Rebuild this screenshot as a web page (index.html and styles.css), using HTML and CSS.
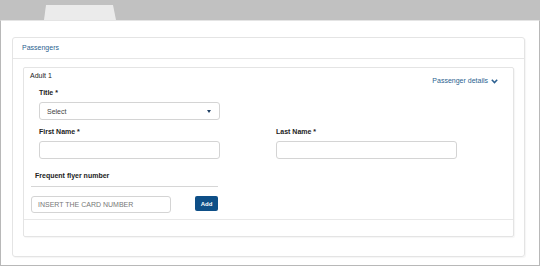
FILE: index.html
```html
<!DOCTYPE html>
<html lang="en">
<head>
  <meta charset="UTF-8" />
  <meta name="viewport" content="width=device-width, initial-scale=1.0"/>
  <title>Passengers</title>
  <link rel="stylesheet" href="styles.css">
</head>
<body>
  <div class="topbar">
    <div class="tab"></div>
  </div>

  <div class="page">
    <div class="panel">
      <div class="panel-head">Passengers</div>
      <div class="panel-body">
        <div class="card">
          <div class="card-head">
            <span class="adult">Adult 1</span>
            <a class="details" href="#">Passenger details
              <svg width="7" height="5" viewBox="0 0 7 5"><polyline points="0.8,0.8 3.5,3.6 6.2,0.8" fill="none" stroke="#2b5f90" stroke-width="1.5"/></svg>
            </a>
          </div>

          <div class="form">
            <label class="lbl">Title *</label>
            <div class="select">
              <span>Select</span>
              <span class="caret"></span>
            </div>

            <div class="row">
              <div class="col">
                <label class="lbl lbl-gap">First Name *</label>
                <div class="input"></div>
              </div>
              <div class="col">
                <label class="lbl lbl-gap">Last Name *</label>
                <div class="input"></div>
              </div>
            </div>
          </div>

          <div class="flyer">
            <div class="flyer-title">Frequent flyer number</div>
            <div class="flyer-row">
              <div class="card-input">INSERT THE CARD NUMBER</div>
              <button class="add">Add</button>
            </div>
          </div>

          <div class="card-foot"></div>
        </div>
      </div>
    </div>
  </div>
</body>
</html>
```

FILE: styles.css
```css
body {
  margin: 0;
  background: #fff;
  font-family: "Liberation Sans", Arial, sans-serif;
  font-size: 7px;
  color: #333;
}
.topbar {
  height: 20px;
  background: #c1c1c1;
  display: flex;
  align-items: flex-end;
  padding-left: 44px;
}
.tab {
  width: 72px;
  height: 15px;
  background: #ebebeb;
  clip-path: polygon(2px 0, 69px 0, 72px 100%, 0 100%);
  border-radius: 2px 2px 0 0;
}
.page {
  border: 1px solid #b8b8b8;
  border-top: 1px solid #e4e4e4;
  padding: 16px 14px 8px 11px;
}
.panel {
  border: 1px solid #e4e4e4;
  border-radius: 3px;
  box-shadow: 1px 1px 1px rgba(0,0,0,0.04);
}
.panel-head {
  height: 20px;
  line-height: 20px;
  padding-left: 9px;
  color: #2b5f90;
  border-bottom: 1px solid #e6e6e6;
}
.panel-body {
  padding: 8px 10px 19px 10px;
}
.card {
  border: 1px solid #e4e4e4;
  border-radius: 2px;
  box-shadow: 1px 1px 1px rgba(0,0,0,0.04);
}
.card-head {
  height: 20px;
  display: flex;
  justify-content: space-between;
  align-items: flex-start;
  padding: 0 15px 0 6px;
}
.adult {
  margin-top: 3px;
  line-height: 10px;
  color: #222;
}
.details {
  margin-top: 8px;
  line-height: 10px;
  color: #2b5f90;
  text-decoration: none;
  display: flex;
  align-items: center;
  gap: 3px;
}
.form {
  padding-left: 15px;
}
.lbl {
  display: block;
  font-weight: bold;
  line-height: 10px;
  color: #222;
  margin-bottom: 4px;
}
.lbl-gap {
  margin-top: 7px;
}
.select {
  width: 181px;
  height: 18px;
  box-sizing: border-box;
  border: 1px solid #d4d4d4;
  border-radius: 3px;
  display: flex;
  align-items: center;
  justify-content: space-between;
  padding: 0 8px 0 7px;
  color: #444;
}
.caret {
  width: 0;
  height: 0;
  border-left: 2.5px solid transparent;
  border-right: 2.5px solid transparent;
  border-top: 3px solid #1f3f63;
}
.row {
  display: flex;
  gap: 56px;
}
.input {
  width: 181px;
  height: 18px;
  box-sizing: border-box;
  border: 1px solid #d4d4d4;
  border-radius: 3px;
}
.flyer {
  padding-left: 7px;
  margin-top: 12px;
}
.flyer-title {
  width: 183px;
  padding: 0 0 5px 4px;
  line-height: 10px;
  font-weight: bold;
  color: #222;
  border-bottom: 1px solid #d6d6d6;
}
.flyer-row {
  display: flex;
  align-items: flex-start;
  gap: 24px;
  margin-top: 9px;
}
.card-input {
  width: 140px;
  height: 17px;
  box-sizing: border-box;
  border: 1px solid #d4d4d4;
  border-radius: 3px;
  padding-left: 6px;
  line-height: 15px;
  color: #777;
}
.add {
  width: 23px;
  height: 15px;
  padding: 0;
  border: none;
  border-radius: 2px;
  background: #0e4f87;
  color: #fff;
  font-family: inherit;
  font-size: 6px;
  font-weight: bold;
}
.card-foot {
  margin-top: 6px;
  height: 16px;
  border-top: 1px solid #e8e8e8;
}
```
